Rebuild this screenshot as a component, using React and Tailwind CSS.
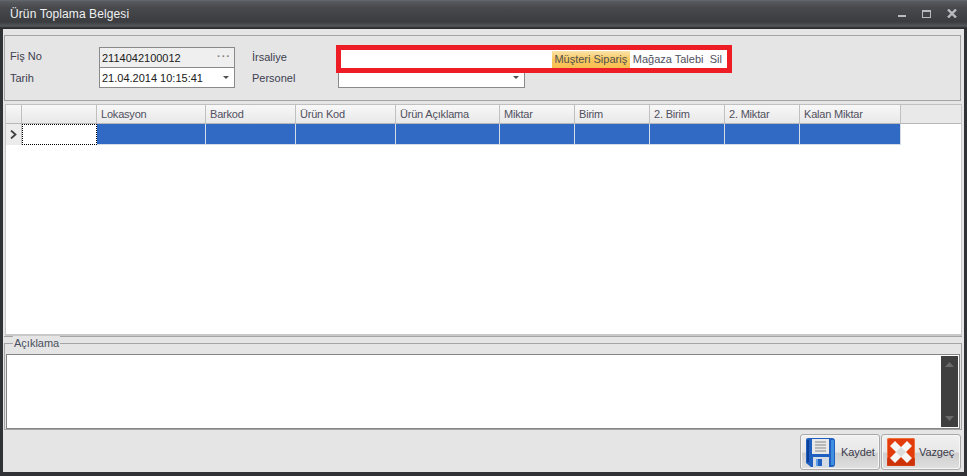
const cols = [
  { w: 75, t: "" },
  { w: 109, t: "Lokasyon" },
  { w: 90, t: "Barkod" },
  { w: 100, t: "Ürün Kod" },
  { w: 104, t: "Ürün Açıklama" },
  { w: 75, t: "Miktar" },
  { w: 75, t: "Birim" },
  { w: 75, t: "2. Birim" },
  { w: 75, t: "2. Miktar" },
  { w: 101, t: "Kalan Miktar" },
];

function Floppy() {
  return (
    <svg width="29" height="29" viewBox="0 0 29 29">
      <path d="M2 0H26Q29 0 29 3V26Q29 29 26 29H5L0 25V2Q0 0 2 0Z" fill="#1f5fc0" />
      <rect x="25" y="2" width="3" height="25" fill="#3f8fe0" />
      <rect x="1" y="2" width="2" height="22" fill="#0d3f96" />
      <rect x="6" y="1" width="17" height="15" fill="#e8e8e8" />
      <path d="M9 4H20M9 7H20M9 10H20M9 13H20" stroke="#a8a8a8" strokeWidth="1.4" />
      <rect x="7" y="19" width="16" height="10" fill="#d4dbe4" />
      <rect x="10" y="21" width="6" height="7" fill="#1f5fc0" />
      <rect x="10" y="21" width="2" height="7" fill="#5fa0e8" />
    </svg>
  );
}

function RedX() {
  return (
    <svg width="28" height="28" viewBox="0 0 28 28">
      <rect width="28" height="28" rx="2" fill="#e23c0c" />
      <rect x="0.5" y="0.5" width="27" height="27" rx="2" fill="none" stroke="#f07040" />
      <rect y="20" width="28" height="8" fill="#c62e08" opacity="0.7" />
      <path d="M8 3L14 9L20 3L25 8L19 14L25 20L20 25L14 19L8 25L3 20L9 14L3 8Z" fill="#f6f6f6" />
      <path d="M14 9L19 14L14 19L9 14Z" fill="#dcdcdc" />
    </svg>
  );
}

function Btn({ icon, label, w, gap }) {
  return (
    <div className={`${w} h-[36px] flex items-center rounded-[3px] border border-[#a9a9a9] bg-[linear-gradient(#f0f0f0_0%,#e8e8e8_50%,#cfcfcf_54%,#e0e0e0_100%)] pl-[5px] shadow-[inset_0_0_0_1px_#f6f6f6]`}>
      {icon}
      <span className={`${gap} text-[#3a3a4a] tracking-[-0.1px]`}>{label}</span>
    </div>
  );
}

export default function App() {
  return (
    <div
      className="w-[967px] h-[476px] flex flex-col overflow-hidden bg-[#e5e5e5] text-[11px] leading-[14px] text-[#404050]"
      style={{ fontFamily: '"Liberation Sans", Arial, sans-serif' }}
    >
      {/* title bar */}
      <div className="h-[29px] shrink-0 flex items-center justify-between bg-[linear-gradient(#666a6e_0px,#55585c_2px,#47494d_8px,#3a3c40_22px,#55585b_26px,#2a2b2e_28px)] pl-[10px] pr-[10px]">
        <span className="text-[12px] tracking-[0.1px] text-[#f0f0f0] pb-[1px]">Ürün Toplama Belgesi</span>
        <div className="flex items-center gap-[16px] pb-[2px]">
          <svg width="8" height="9" viewBox="0 0 8 9"><rect y="6" width="8" height="2" fill="#b8bcc0" /></svg>
          <svg width="9" height="8" viewBox="0 0 9 8"><rect x="0.5" y="0.5" width="8" height="7" fill="none" stroke="#b8bcc0" /><rect width="9" height="2" fill="#b8bcc0" /></svg>
          <svg width="10" height="9" viewBox="0 0 10 9"><path d="M1 0.5L9 8.5M9 0.5L1 8.5" stroke="#b8bcc0" strokeWidth="2.4" /></svg>
        </div>
      </div>

      {/* body */}
      <div className="flex-1 flex flex-col border-x-[3px] border-b-[4px] border-[#303236] min-h-0">
        {/* filter panel */}
        <div className="relative mt-[6px] h-[66px] shrink-0 mr-[3px] ml-[1px] border border-[#a4a4a4] pl-[5px] pt-[11px]">
          <div className="flex h-[21px] items-center">
            <span className="w-[89px] pb-[3px]">Fiş No</span>
            <div className="w-[136px] h-[21px] flex items-center justify-between border border-[#8a8a8a] bg-[#efefef] pl-[2px] pr-[3px] text-[#202020]">
              <span>2114042100012</span>
              <span className="text-[#808080] font-bold tracking-[1px] leading-[8px] pb-[3px]">···</span>
            </div>
            <span className="ml-[17px] w-[86px] pb-[1px]">İrsaliye</span>
          </div>
          <div className="flex h-[20px] items-center">
            <span className="w-[89px]">Tarih</span>
            <div className="w-[136px] h-[20px] flex items-center justify-between border border-t-0 border-[#8a8a8a] bg-white pl-[2px] pr-[5px] text-[#202020]">
              <span>21.04.2014 10:15:41</span>
              <svg width="6" height="3" viewBox="0 0 6 3"><path d="M0 0H6L3 3Z" fill="#505050" /></svg>
            </div>
            <span className="ml-[17px] w-[86px]">Personel</span>
            <div className="w-[187px] h-[20px] flex items-center justify-end border border-t-0 border-[#8a8a8a] bg-white pr-[5px]">
              <svg width="6" height="3" viewBox="0 0 6 3"><path d="M0 0H6L3 3Z" fill="#505050" /></svg>
            </div>
          </div>
          {/* red highlighted toolbar */}
          <div className="absolute left-[331px] top-[9px] w-[396px] h-[28px] border-[5px] border-[#ee1c25] bg-white flex items-center justify-end">
            <div className="flex h-[17px] items-center pr-[5px] whitespace-nowrap">
              <span className="h-[17px] w-[78px] flex items-center justify-center bg-[linear-gradient(#fbe3a8,#f9c860_50%,#f7c050)] text-[#505050]">Müşteri Sipariş</span>
              <span className="ml-[3px] w-[70px] text-[#505060]">Mağaza Talebi</span>
              <span className="ml-[7px] text-[#505060]">Sil</span>
            </div>
          </div>
        </div>

        {/* grid */}
        <div className="mt-[3px] mx-[2px] h-[232px] shrink-0 bg-white border-l border-r border-b-2 border-[#c8c8c8] flex flex-col">
          <div className="h-[20px] flex bg-[linear-gradient(#f8f8f8,#e8e8e8)] border-b border-[#b8b8b8] border-t border-t-[#c0c0c0]">
            <div className="w-[16px] h-full border-r border-[#c0c0c0]" />
            {cols.map((c, i) => (
              <div key={i} style={{ width: c.w }} className="shrink-0 h-full border-r border-[#c0c0c0] pl-[4px] flex items-center tracking-[-0.2px] text-[#505060]">
                {c.t}
              </div>
            ))}
            <div className="flex-1 bg-[#e9e9e9]" />
          </div>
          <div className="h-[21px] flex">
            <div className="w-[16px] h-full flex items-center justify-center bg-[#ececec] border-r border-[#c0c0c0]">
              <svg width="7" height="9" viewBox="0 0 7 9"><path d="M1 0.5L5.5 4.5L1 8.5" fill="none" stroke="#404040" strokeWidth="1.8" /></svg>
            </div>
            {cols.map((c, i) => (
              <div key={i} style={{ width: c.w }} className={i === 0 ? "shrink-0 h-full bg-white border border-dotted border-black" : "shrink-0 h-full bg-[#316ac5] border-r border-b border-[#d4dce8]"} />
            ))}
          </div>
        </div>
        <div className="h-[1px] shrink-0 ml-[1px] mr-[2px] bg-[#a4a4a4]" />

        {/* description */}
        <div className="ml-[1px] mr-[2px] h-[87px] shrink-0 mt-[6px] border border-[#a4a4a4] relative">
          <span className="absolute left-[8px] -top-[8px] bg-[#e5e5e5] px-[1px] text-[#4a5060]">Açıklama</span>
          <div className="mt-[10px] mx-[1px] h-[75px] border border-[#858585] bg-white flex justify-end p-[1px]">
            <div className="w-[17px] h-full bg-[#3f3f3f] flex flex-col justify-between items-center py-[6px]">
              <svg width="9" height="5" viewBox="0 0 9 5"><path d="M0 5L4.5 0L9 5Z" fill="#6a6a6a" /></svg>
              <svg width="9" height="5" viewBox="0 0 9 5"><path d="M0 0L9 0L4.5 5Z" fill="#6a6a6a" /></svg>
            </div>
          </div>
        </div>

        {/* buttons */}
        <div className="flex-1 flex justify-end items-start pt-[4px] pr-[3px] gap-[1px]">
          <Btn w="w-[80px]" gap="ml-[6px]" icon={<Floppy />} label="Kaydet" />
          <Btn w="w-[80px]" gap="ml-[4px]" icon={<RedX />} label="Vazgeç" />
        </div>
      </div>
    </div>
  );
}
